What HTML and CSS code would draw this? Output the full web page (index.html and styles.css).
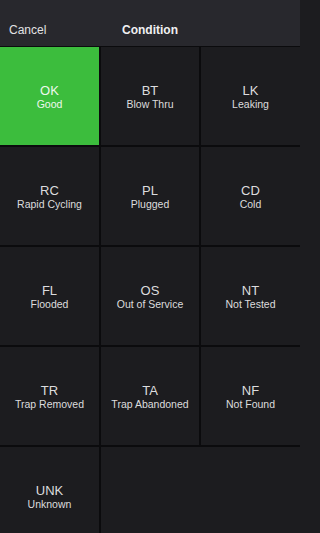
FILE: index.html
```html
<!DOCTYPE html>
<html>
<head>
<meta charset="utf-8">
<link rel="stylesheet" href="styles.css">
</head>
<body>
<div class="screen">
  <header class="navbar">
    <span class="cancel">Cancel</span>
    <span class="title">Condition</span>
  </header>
  <main class="grid">
    <div class="cell selected"><span class="code">OK</span><span class="label">Good</span></div>
    <div class="cell"><span class="code">BT</span><span class="label">Blow Thru</span></div>
    <div class="cell"><span class="code">LK</span><span class="label">Leaking</span></div>
    <div class="cell"><span class="code">RC</span><span class="label">Rapid Cycling</span></div>
    <div class="cell"><span class="code">PL</span><span class="label">Plugged</span></div>
    <div class="cell"><span class="code">CD</span><span class="label">Cold</span></div>
    <div class="cell"><span class="code">FL</span><span class="label">Flooded</span></div>
    <div class="cell"><span class="code">OS</span><span class="label">Out of Service</span></div>
    <div class="cell"><span class="code">NT</span><span class="label">Not Tested</span></div>
    <div class="cell"><span class="code">TR</span><span class="label">Trap Removed</span></div>
    <div class="cell"><span class="code">TA</span><span class="label">Trap Abandoned</span></div>
    <div class="cell"><span class="code">NF</span><span class="label">Not Found</span></div>
    <div class="cell"><span class="code">UNK</span><span class="label">Unknown</span></div>
    <div class="cell filler"></div>
  </main>
</div>
</body>
</html>
```
FILE: styles.css
```css
html, body {
  margin: 0;
  padding: 0;
  background: #1c1c1f;
  overflow: hidden;
}
.screen {
  width: 300px;
  height: 533px;
  overflow: hidden;
  font-family: "Liberation Sans", Arial, sans-serif;
  display: flex;
  flex-direction: column;
}
.navbar {
  position: relative;
  height: 46px;
  box-sizing: border-box;
  padding: 14px 0 0 9px;
  background: #28282d;
  display: flex;
  align-items: center;
  flex-shrink: 0;
}
.cancel {
  font-size: 12px;
  color: #e2e2e4;
}
.title {
  position: absolute;
  left: 0;
  right: 0;
  top: 14px;
  bottom: 0;
  display: flex;
  align-items: center;
  justify-content: center;
  font-size: 12px;
  font-weight: bold;
  color: #f0f0f2;
  pointer-events: none;
}
.grid {
  display: grid;
  grid-template-columns: 99px 98px 1fr;
  grid-auto-rows: 98px;
  gap: 2px;
  padding-top: 1px;
  background: #0b0b0d;
  flex: 1;
}
.cell {
  background: #1c1c1f;
  display: flex;
  flex-direction: column;
  align-items: center;
  justify-content: center;
  color: #dcdcde;
  padding-top: 1px;
}
.cell.selected {
  background: #3cbd3d;
  color: #eef8ee;
}
.cell.filler {
  grid-column: span 2;
}
.code {
  font-size: 13px;
  line-height: 15px;
}
.label {
  font-size: 10.5px;
  line-height: 13px;
}
```
